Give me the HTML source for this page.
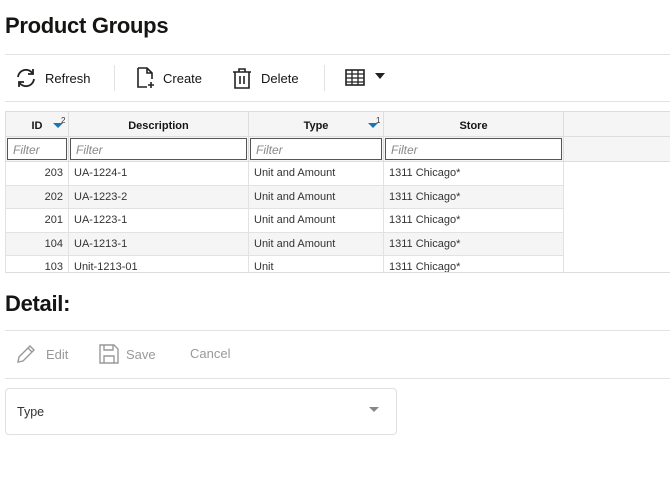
<!DOCTYPE html>
<html><head><style>
*{box-sizing:border-box;margin:0;padding:0}
body{width:670px;height:495px;background:#fff;font-family:"Liberation Sans",sans-serif;color:#161513;position:relative;overflow:hidden}
.a{position:absolute}
h1{position:absolute;left:5px;top:13px;font-size:22px;font-weight:bold;letter-spacing:-0.3px}
.hr{position:absolute;left:5px;right:0;height:1px;background:#e3e3e3}
.btn{position:absolute;font-size:13px;display:flex;align-items:center;gap:8px}
.sep{position:absolute;width:1px;height:26px;background:#e3e3e3}
table{position:absolute;left:0;top:0;border-collapse:collapse;font-size:11px;table-layout:fixed;width:666px}
.tw{position:absolute;left:5px;top:111px;width:665px;height:161px;overflow:hidden}
th{height:25px;background:#f5f5f5;border:1px solid #ddd;font-weight:bold;font-size:11px;position:relative;padding-top:3px}
td{border:1px solid #e2e2e2;height:23.5px;padding:0 5px;color:#333;white-space:nowrap;overflow:hidden}
td.f{padding:1px 1px;height:24px;border:1px solid #ddd;background:#f5f5f5}
.fi{border:1px solid #555;height:22px;font-style:italic;color:#888;padding:4px 5px;background:#fff;font-size:12px}
tr.g td{background:#f5f5f5}
.srt{position:absolute;right:5px;top:11px;width:0;height:0;border-left:5px solid transparent;border-right:5px solid transparent;border-top:5px solid #1a75b5}
.srt i{position:absolute;left:3px;top:-12px;font-size:8px;font-style:normal;font-weight:normal;color:#333}
</style></head><body>
<h1>Product Groups</h1>
<div class="hr" style="top:54px"></div>
<div class="btn" style="left:15px;top:67px">
<svg width="22" height="22" viewBox="0 0 22 22" fill="none" stroke="#222" stroke-width="1.8"><path d="M3 10a8 8 0 0 1 15-3M19 12a8 8 0 0 1-15 3"/><path d="M18 2v5h-5M4 20v-5h5"/></svg><span>Refresh</span></div>
<div class="sep" style="left:114px;top:65px"></div>
<div class="btn" style="left:136px;top:67px">
<svg width="20" height="22" viewBox="0 0 20 22" fill="none" stroke="#222" stroke-width="1.6"><path d="M2 1h9l5 5v6M11 1v5h5M2 1v19h9"/><path d="M15 15v6M12 18h6"/></svg><span style="margin-left:-1px">Create</span></div>
<div class="btn" style="left:232px;top:67px">
<svg width="20" height="22" viewBox="0 0 20 22" fill="none" stroke="#222" stroke-width="1.6"><path d="M1 5h18M7 5V2h6v3M3 5v16h14V5M8 9v8M12 9v8"/></svg><span style="margin-left:1px">Delete</span></div>
<div class="sep" style="left:324px;top:65px"></div>
<div class="a" style="left:345px;top:69px"><svg width="20" height="17" viewBox="0 0 20 17" fill="none" stroke="#222" stroke-width="1.6"><rect x="1" y="1" width="18" height="15"/><path d="M1 5h18M1 9h18M1 13h18M7 1v15M13 1v15" stroke-width="1.3"/></svg></div>
<div class="a" style="left:375px;top:73px;border-left:5px solid transparent;border-right:5px solid transparent;border-top:6px solid #222"></div>
<div class="hr" style="top:101px"></div>
<div class="tw">
<table>
<colgroup><col style="width:63px"><col style="width:180px"><col style="width:135px"><col style="width:180px"><col style="width:108px"></colgroup>
<tr><th>ID<span class="srt"><i>2</i></span></th><th>Description</th><th>Type<span class="srt"><i>1</i></span></th><th>Store</th><th style="border-right:none"></th></tr>
<tr><td class="f"><div class="fi">Filter</div></td><td class="f"><div class="fi">Filter</div></td><td class="f"><div class="fi">Filter</div></td><td class="f"><div class="fi">Filter</div></td><td class="f" style="border-left:none"></td></tr>
<tr><td style="text-align:right">203</td><td>UA-1224-1</td><td>Unit and Amount</td><td>1311 Chicago*</td><td style="border:none;background:#fff"></td></tr>
<tr class="g"><td style="text-align:right">202</td><td>UA-1223-2</td><td>Unit and Amount</td><td>1311 Chicago*</td><td style="border:none;background:#fff"></td></tr>
<tr><td style="text-align:right">201</td><td>UA-1223-1</td><td>Unit and Amount</td><td>1311 Chicago*</td><td style="border:none;background:#fff"></td></tr>
<tr class="g"><td style="text-align:right">104</td><td>UA-1213-1</td><td>Unit and Amount</td><td>1311 Chicago*</td><td style="border:none;background:#fff"></td></tr>
<tr><td style="text-align:right">103</td><td>Unit-1213-01</td><td>Unit</td><td>1311 Chicago*</td><td style="border:none;background:#fff"></td></tr>
</table></div>
<div class="hr" style="top:272px;height:1px;background:#ddd"></div>
<h1 style="top:291px">Detail:</h1>
<div class="hr" style="top:330px"></div>
<div class="btn" style="left:16px;top:344px;color:#999">
<svg width="20" height="20" viewBox="0 0 20 20" fill="none" stroke="#999" stroke-width="1.4"><path d="M2 18l1-5L14 2l4 4L7 17zM12 4l4 4"/></svg><span style="margin-left:2px">Edit</span></div>
<div class="btn" style="left:99px;top:344px;color:#999">
<svg width="20" height="20" viewBox="0 0 20 20" fill="none" stroke="#999" stroke-width="1.4"><path d="M1 1h14l4 4v14H1zM5 1v5h9V1M5 19v-7h10v7"/></svg><span style="margin-left:-1px">Save</span></div>
<div class="btn" style="left:190px;top:346px;color:#999">Cancel</div>
<div class="hr" style="top:378px"></div>
<div class="a" style="left:5px;top:388px;width:392px;height:47px;border:1px solid #e0e0e0;border-radius:4px"></div>
<div class="a" style="left:17px;top:405px;font-size:12.5px;color:#333">Type</div>
<div class="a" style="left:369px;top:407px;border-left:5px solid transparent;border-right:5px solid transparent;border-top:5px solid #888"></div>
</body></html>
